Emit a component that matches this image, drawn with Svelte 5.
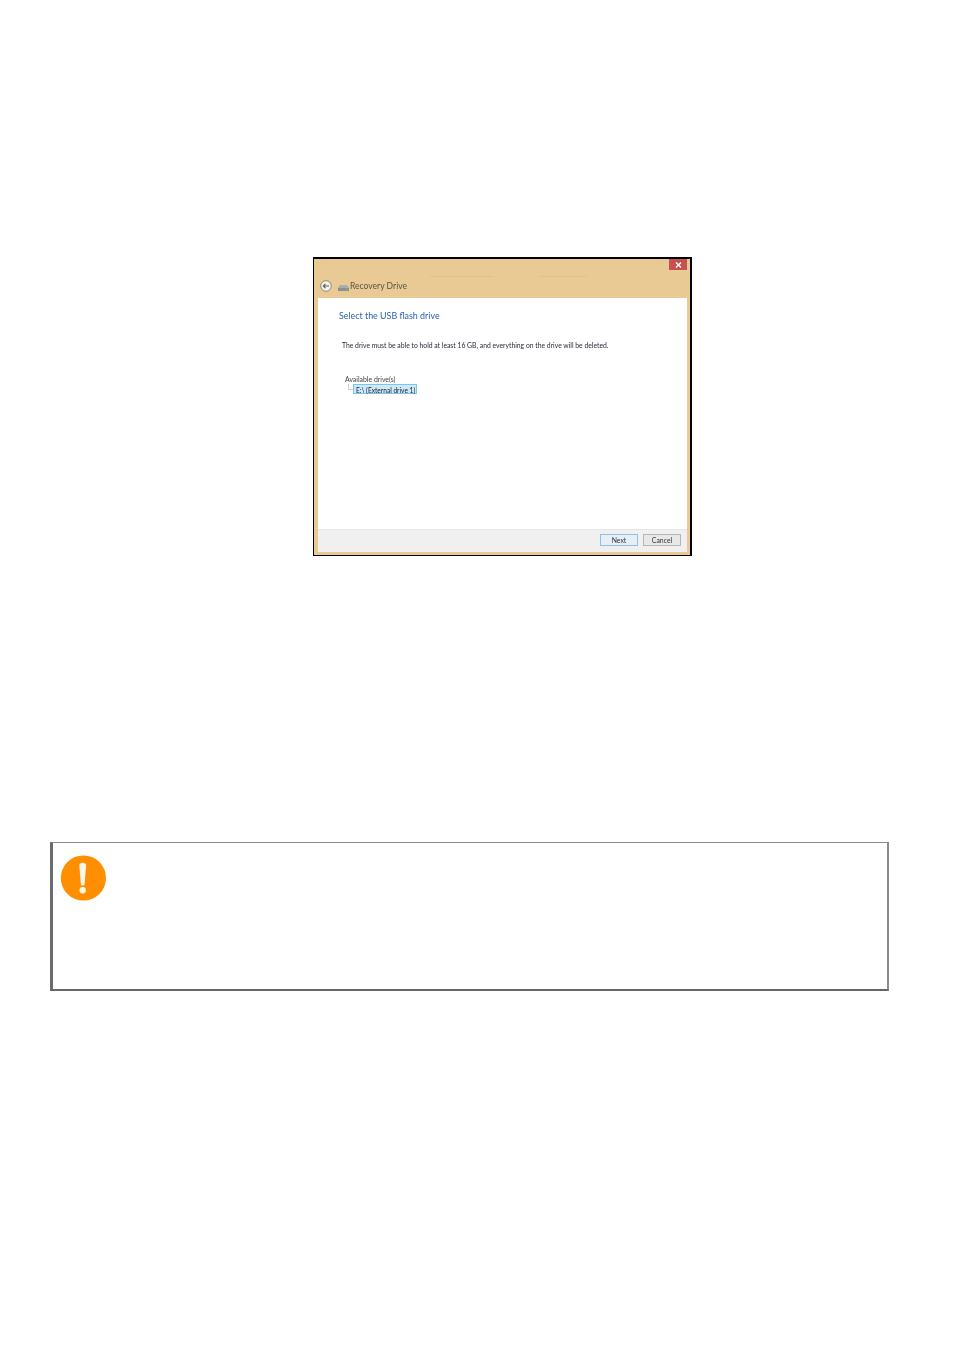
<script>
  const description = "The drive must be able to hold at least 16 GB, and everything on the drive will be deleted.";
</script>

<div class="page">
  <section class="window">
    <header class="titlebar">
      <div class="close-row">
        <button class="close">
          <svg width="7" height="6" viewBox="0 0 7 6"><path d="M1 .5l5 5M6 .5l-5 5" stroke="#fff" stroke-width="1.4" fill="none" /></svg>
        </button>
      </div>
      <div class="glass-line"></div>
      <div class="nav">
        <svg class="back" width="12" height="12" viewBox="0 0 12 12">
          <circle cx="6" cy="6" r="5.3" fill="#f6f3ec" stroke="#77736a" stroke-width=".8" />
          <path d="M9 6H3.4M5.5 3.8L3.3 6l2.2 2.2" stroke="#5c5c5c" stroke-width="1.1" fill="none" />
        </svg>
        <svg class="drive" width="11" height="6" viewBox="0 0 11 6">
          <path d="M2 0h7l2 3v3H0V3z" fill="#a9abae" />
          <rect x="0" y="3" width="11" height="3" fill="#8b8e92" />
          <rect x="7.5" y="4" width="2" height="1" fill="#7fc46a" />
        </svg>
        <span class="app-name">Recovery Drive</span>
      </div>
    </header>

    <div class="content">
      <h1>Select the USB flash drive</h1>
      <p class="description">{description}</p>
      <div class="drives">
        <div class="drives-label">Available drive(s)</div>
        <div class="drive-row">
          <span class="tree-line"></span>
          <span class="drive-item">E:\ (External drive 1)</span>
        </div>
      </div>
    </div>

    <footer class="actions">
      <button class="btn primary">Next</button>
      <button class="btn">Cancel</button>
    </footer>
  </section>

  <aside class="notice">
    <svg width="46" height="46" viewBox="0 0 46 46">
      <circle cx="23.4" cy="23" r="22.6" fill="#ff8f00" />
      <path d="M19.3 10.5c0-1.6 1.4-2.7 3.4-2.7s3.4 1.1 3.4 2.7L24.6 29c-.1 1-.8 1.5-1.9 1.5s-1.8-.5-1.9-1.5z" fill="#fff" fill-opacity=".92" />
      <circle cx="22.7" cy="35.2" r="3.2" fill="#fff" fill-opacity=".92" />
    </svg>
  </aside>
</div>

<style>
  :global(body) {
    margin: 0;
    background: #fff;
  }

  .page {
    height: 1351px;
    padding-top: 257px;
    box-sizing: border-box;
    overflow: hidden;
    font-family: "Lato", "Open Sans", sans-serif;
  }

  .window {
    width: 379px;
    height: 299px;
    margin-left: 313px;
    box-sizing: border-box;
    display: flex;
    flex-direction: column;
    background: #eaca94;
    border-style: solid;
    border-color: #000;
    border-width: 2px 2px 1px 1px;
    padding: 0 3px 3px 4px;
  }

  .titlebar {
    height: 39px;
    flex: none;
    display: flex;
    flex-direction: column;
  }

  .close-row {
    height: 11px;
    display: flex;
    justify-content: flex-end;
  }

  .close {
    width: 18px;
    height: 11px;
    padding: 0;
    border: none;
    background: #c75050;
    display: flex;
    align-items: center;
    justify-content: center;
  }

  .glass-line {
    height: 1px;
    margin: 6px 100px 0 112px;
    background: linear-gradient(90deg, #e3c28a 0 40%, #e9c992 40% 70%, #e3c28a 70%);
  }

  .nav {
    display: flex;
    align-items: center;
    height: 14px;
    margin-top: 2px;
    margin-left: 2px;
    filter: blur(0.3px);
  }

  .back {
    margin-right: 6px;
  }

  .drive {
    margin-top: 3px;
    margin-right: 1px;
  }

  .app-name {
    font-size: 8.55px;
    line-height: 14px;
    color: #5a5448;
  }

  .content {
    flex: 1;
    background: #fff;
    padding: 12px 0 0 21px;
    min-height: 0;
  }

  h1 {
    margin: 0;
    font-size: 8.9px;
    line-height: 12px;
    font-weight: 400;
    color: #2a5db2;
    filter: blur(0.35px);
  }

  .description {
    margin: 18px 0 0 3px;
    font-size: 6.8px;
    line-height: 10px;
    color: #2a2a3a;
    white-space: nowrap;
    filter: blur(0.35px);
  }

  .drives {
    margin: 25px 0 0 6px;
    font-size: 6.9px;
    line-height: 9px;
    color: #444;
    filter: blur(0.35px);
  }

  .drive-row {
    display: flex;
    align-items: flex-start;
    margin-left: 3px;
  }

  .tree-line {
    width: 4px;
    height: 5px;
    border-left: 1px solid #d0d0d0;
    border-bottom: 1px solid #d0d0d0;
  }

  .drive-item {
    width: 64px;
    height: 10px;
    box-sizing: border-box;
    padding: 1px 0 0 2px;
    font-size: 6.6px;
    line-height: 8px;
    color: #222;
    background: #cce8ff;
    border: 1px solid #7cc4ea;
    white-space: nowrap;
  }

  .actions {
    height: 23px;
    flex: none;
    box-sizing: border-box;
    background: #f0f0f0;
    border-top: 1px solid #e6e6e6;
    padding: 4px 6px 0 0;
    display: flex;
    justify-content: flex-end;
    gap: 5px;
  }

  .btn {
    width: 38px;
    height: 12px;
    padding: 1px 0 0;
    box-sizing: border-box;
    border: 1px solid #b5b5b5;
    background: #e8e8e8;
    font-family: inherit;
    font-size: 6.9px;
    line-height: 9px;
    color: #333;
    filter: blur(0.35px);
  }

  .btn.primary {
    border-color: #8fbfe8;
    background: #e6eff8;
  }

  .notice {
    width: 839px;
    height: 149px;
    margin: 286px 0 0 50px;
    box-sizing: border-box;
    background: #fff;
    border-style: solid;
    border-width: 1px 2px 2px 3px;
    border-color: #8a8a8a #8a8a8a #666 #6b6b6b;
    padding: 12px 0 0 7px;
  }

  .notice svg {
    display: block;
  }
</style>
